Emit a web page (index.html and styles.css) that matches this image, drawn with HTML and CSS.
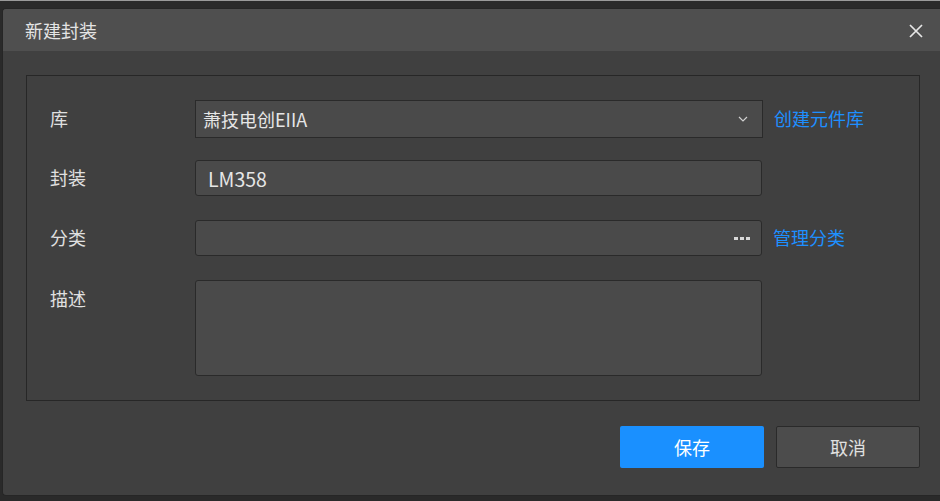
FILE: index.html
```html
<!DOCTYPE html>
<html lang="zh">
<head>
<meta charset="utf-8">
<title>新建封装</title>
<link rel="stylesheet" href="styles.css">
</head>
<body>
<div class="topline"></div>
<div class="stage">
  <div class="dialog">
    <div class="header">
      <span class="title">新建封装</span>
      <svg class="close" width="16" height="16" viewBox="0 0 16 16"><path d="M2 2 L14 14 M14 2 L2 14" stroke="#e6e6e6" stroke-width="1.7" fill="none"/></svg>
    </div>
    <div class="content">
      <div class="panel">
        <div class="row row-lib">
          <label class="label">库</label>
          <div class="field select">
            <span class="value">萧技电创EIIA</span>
            <svg class="chev" width="10" height="6" viewBox="0 0 10 6"><path d="M1 1 L5 5 L9 1" stroke="#d0d0d0" stroke-width="1.2" fill="none"/></svg>
          </div>
          <a class="link">创建元件库</a>
        </div>
        <div class="row">
          <label class="label">封装</label>
          <div class="field input"><span class="value latin">LM358</span></div>
        </div>
        <div class="row row-spaced">
          <label class="label">分类</label>
          <div class="field input">
            <span class="dots"><i></i><i></i><i></i></span>
          </div>
          <a class="link">管理分类</a>
        </div>
        <div class="row row-desc row-spaced">
          <label class="label">描述</label>
          <div class="field textarea"></div>
        </div>
      </div>
      <div class="footer">
        <button class="btn primary">保存</button>
        <button class="btn secondary">取消</button>
      </div>
    </div>
  </div>
</div>
</body>
</html>
```

FILE: styles.css
```css
* { box-sizing: border-box; }
html, body {
  margin: 0;
  padding: 0;
  width: 940px;
  height: 501px;
  overflow: hidden;
  background: #2a2a2a;
  font-family: "Noto Sans CJK SC", "Noto Sans", sans-serif;
  color: #e0e0e0;
}
.topline {
  height: 1px;
  background: #9a9a9a;
}
.stage {
  padding: 7px 0 0 2px;
}
.dialog {
  width: 938px;
  height: 488px;
  background: #404040;
  border: 1px solid #262626;
  border-right: none;
  border-radius: 4px 0 0 4px;
  display: flex;
  flex-direction: column;
  overflow: hidden;
}
.header {
  height: 42px;
  background: #4f4f4f;
  display: flex;
  align-items: center;
  justify-content: space-between;
  padding: 0 16px 0 22px;
  flex-shrink: 0;
}
.title {
  font-size: 18px;
  color: #e4e4e4;
}
.close { display: block; margin-top: 1px; }
.content {
  padding: 24px 20px 0 23px;
  display: flex;
  flex-direction: column;
}
.panel {
  border: 1px solid #272727;
  padding: 24px 0 24px 23px;
  display: flex;
  flex-direction: column;
  gap: 22px;
}
.row {
  display: flex;
  align-items: center;
  height: 36px;
}
.row-lib { height: 38px; }
.row-spaced { margin-top: 2px; }
.row-desc {
  align-items: flex-start;
  height: 96px;
}
.row-desc .label { padding-top: 5px; }
.label {
  width: 145px;
  font-size: 18px;
  color: #e0e0e0;
  flex-shrink: 0;
  padding-bottom: 2px;
}
.field {
  width: 567px;
  height: 100%;
  background: #4a4a4a;
  border: 1px solid #2a2a2a;
  border-radius: 3px;
  display: flex;
  align-items: center;
  padding: 0 12px 0 7px;
}
.select {
  border-radius: 0;
  width: 568px;
  justify-content: space-between;
}
.value {
  font-size: 18px;
  color: #e6e6e6;
}
.latin { padding-left: 5px; font-size: 19.5px; }
.chev { margin-right: 2px; }
.dots {
  margin-left: auto;
  display: flex;
  gap: 2px;
  margin-right: -1px;
}
.dots i {
  width: 4px;
  height: 3px;
  background: #d8d8d8;
  display: block;
}
.textarea { align-items: flex-start; }
.link {
  margin-left: 11px;
  font-size: 18px;
  color: #1e8fff;
  cursor: pointer;
  padding-bottom: 2px;
}
.footer {
  display: flex;
  justify-content: flex-end;
  gap: 12px;
  padding-top: 25px;
}
.btn {
  width: 144px;
  height: 42px;
  border-radius: 2px;
  font-family: "Noto Sans CJK SC", sans-serif;
  font-size: 18px;
  cursor: pointer;
}
.primary {
  background: #1a90ff;
  border: none;
  color: #ffffff;
}
.secondary {
  background: #4c4c4c;
  border: 1px solid #2a2a2a;
  color: #e0e0e0;
}
```
